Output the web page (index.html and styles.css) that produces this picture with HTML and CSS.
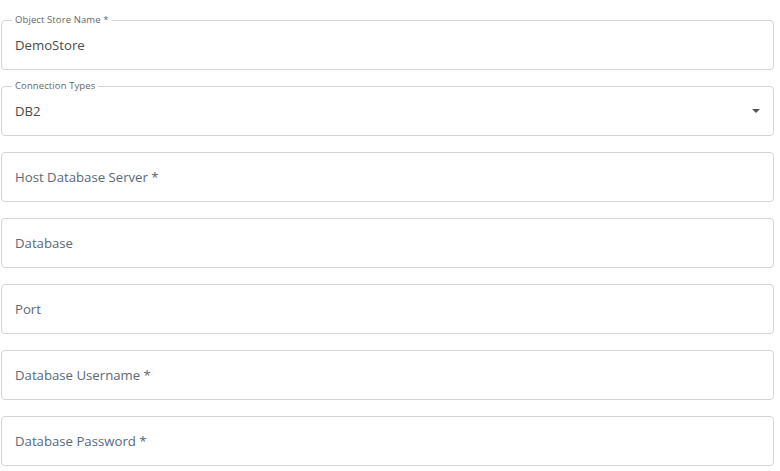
FILE: index.html
```html
<!DOCTYPE html>
<html lang="en">
<head>
  <meta charset="UTF-8">
  <title>Object Store</title>
  <link rel="stylesheet" href="styles.css">
</head>
<body>
  <form class="store-form">
    <div class="field filled">
      <span class="field-label">Object Store Name *</span>
      <span class="field-value">DemoStore</span>
    </div>

    <div class="field filled select">
      <span class="field-label">Connection Types</span>
      <span class="field-value">DB2</span>
      <span class="caret"></span>
    </div>

    <div class="field">
      <span class="field-placeholder">Host Database Server *</span>
    </div>

    <div class="field">
      <span class="field-placeholder">Database</span>
    </div>

    <div class="field">
      <span class="field-placeholder">Port</span>
    </div>

    <div class="field">
      <span class="field-placeholder">Database Username *</span>
    </div>

    <div class="field">
      <span class="field-placeholder">Database Password *</span>
    </div>
  </form>
</body>
</html>
```

FILE: styles.css
```css
* {
  margin: 0;
  padding: 0;
  box-sizing: border-box;
}

body {
  font-family: "Open Sans", Arial, sans-serif;
  background-color: #fff;
  padding: 20px 6px 0 1px;
}

.store-form {
  display: flex;
  flex-direction: column;
  gap: 16px;
}

.field {
  position: relative;
  height: 50px;
  border: 1px solid #d4d4d4;
  border-radius: 4px;
  display: flex;
  align-items: center;
  padding: 0 13px;
}

.field-label {
  position: absolute;
  top: -7px;
  left: 10px;
  padding: 0 3px;
  background-color: #fff;
  font-size: 9.5px;
  line-height: 12px;
  letter-spacing: 0.1px;
  color: #666;
}

.field-value {
  font-size: 13.2px;
  color: #4a4a4a;
}

.field-placeholder {
  font-size: 13.2px;
  color: #5a6878;
}

.caret {
  margin-left: auto;
  width: 0;
  height: 0;
  border-left: 4px solid transparent;
  border-right: 4px solid transparent;
  border-top: 4px solid #555;
}
```
